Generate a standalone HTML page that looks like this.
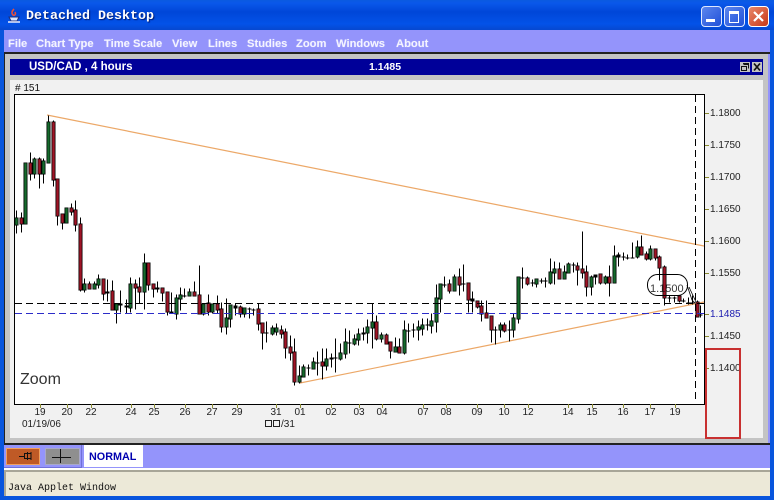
<!DOCTYPE html>
<html><head><meta charset="utf-8">
<style>
html,body{margin:0;padding:0;background:#0855dd}
#w{position:relative;width:774px;height:500px;overflow:hidden;background:#0855dd;font-family:"Liberation Sans",sans-serif}
#w div{position:absolute}
.m{top:37px;color:#f4f4ff;font-weight:bold;font-size:11.2px;line-height:14px;white-space:nowrap;text-shadow:0 0 1px #c0c0ff}
.y{left:710px;font-size:10px;line-height:12px;color:#222;white-space:nowrap}
.d{top:407px;font-size:10px;line-height:12px;color:#222;width:20px;text-align:center}
.btn{border-radius:4px}
</style></head><body>
<div id="w">
<div style="left:0;top:0;width:774px;height:30px;background:linear-gradient(180deg,#0a5ae0 0,#0a58ea 3px,#0046d8 12px,#0352e8 24px,#0648d0 30px)"></div>
<div style="left:26px;top:9px;font:bold 13.33px/16px 'Liberation Mono',monospace;color:#fff;text-shadow:1px 1px 1px #001a70;white-space:nowrap">Detached Desktop</div>
<svg style="position:absolute;left:7px;top:7px" width="14" height="18" viewBox="0 0 14 18"><path d="M7 2C5 4 4 6 6 8C8 9 9 7 8 5" fill="none" stroke="#e8503a" stroke-width="1.6"/><path d="M2 10H12L10 14H4Z" fill="#d8e4ff" stroke="#1c2f80"/><path d="M1 15H13" stroke="#e8ecff" stroke-width="1.5"/></svg>

<div class="btn" style="left:701px;top:6px;width:19px;height:19px;border:1px solid #dfe8ff;background:linear-gradient(135deg,#5c86ee,#2050d8)"></div>
<div style="left:706px;top:19px;width:9px;height:3px;background:#fff"></div>
<div class="btn" style="left:724px;top:6px;width:19px;height:19px;border:1px solid #dfe8ff;background:linear-gradient(135deg,#5c86ee,#2050d8)"></div>
<div style="left:729px;top:11px;width:8px;height:8px;border:1px solid #fff;border-top:3px solid #fff"></div>
<div class="btn" style="left:748px;top:6px;width:19px;height:19px;border:1px solid #fff;background:linear-gradient(135deg,#e8886a,#c83818)"></div>
<svg style="position:absolute;left:748px;top:6px" width="21" height="21"><path d="M6 6L15 15M15 6L6 15" stroke="#fff" stroke-width="2.2"/></svg>

<div style="left:4px;top:30px;width:766px;height:22px;background:#9494fb"></div>
<div class="m" style="left:8px">File</div>
<div class="m" style="left:36px">Chart Type</div>
<div class="m" style="left:104px">Time Scale</div>
<div class="m" style="left:172px">View</div>
<div class="m" style="left:208px">Lines</div>
<div class="m" style="left:247px">Studies</div>
<div class="m" style="left:296px">Zoom</div>
<div class="m" style="left:336px">Windows</div>
<div class="m" style="left:396px">About</div>

<div style="left:4px;top:52px;width:766px;height:2px;background:#222"></div>
<div style="left:4px;top:54px;width:1px;height:389px;background:#222"></div>
<div style="left:5px;top:54px;width:763px;height:389px;background:#c4c4c4"></div>
<div style="left:768px;top:54px;width:2px;height:416px;background:#9494fb"></div>
<div style="left:10px;top:59px;width:753px;height:16px;background:#000099"></div>
<div style="left:29px;top:60px;color:#fff;font-weight:bold;font-size:11.5px;line-height:15px;white-space:nowrap">USD/CAD , 4 hours</div>
<div style="left:369px;top:60px;color:#fff;font-weight:bold;font-size:10.5px;line-height:15px">1.1485</div>
<svg style="position:absolute;left:740px;top:62px" width="23" height="10"><rect width="10" height="10" fill="#c4c4c4"/><path d="M3.5 2.5H8.5V6.5M1.5 4.5H6.5V8.5H1.5Z" fill="none" stroke="#111"/><path d="M3 1.5H9" stroke="#111"/><rect x="12" width="10" height="10" fill="#c4c4c4"/><path d="M14 1.5L20 8.5M20 1.5L14 8.5" stroke="#111" stroke-width="1.7"/></svg>

<div style="left:10px;top:80px;width:753px;height:358px;background:#f1f1f1"></div>
<div style="left:15px;top:83px;font-size:10px;line-height:12px;color:#111">#&nbsp;151</div>
<div style="left:14px;top:94px;width:689px;height:309px;background:#fff;border:1px solid #000"></div>

<svg style="position:absolute;left:0;top:0" width="774" height="500" fill="none">
<path d="M47 115L704 246M300 383L704 302" stroke="#eca868" stroke-width="1.2"/>
<path transform="translate(.5 .5)" stroke="#000" stroke-width="1" d="M16 210V233M21 212V232M25 163V223M30 152V180M34 157V178M39 157V188M43 158V183M48 115V163M53 120V186M57 178V225M62 213V229M66 207V222M71 203V215M75 200V231M80 217V291M84 278V292M89 281V289M94 281V289M98 274V288M103 279V300M107 279V301M112 280V309M116 304V323M120 290V312M126 299V313M130 277V312M135 279V309M139 277V303M144 253V309M148 263V290M153 284V297M157 281V292M162 288V301M167 292V315M171 292V313M176 294V319M180 287V310M184 288V297M189 288V296M194 281V296M199 265V313M203 303V315M208 294V315M212 303V313M217 295V313M221 302V332M226 298V334M230 305V327M235 303V315M240 305V317M244 308V317M249 307V318M253 308V315M258 303V330M262 323V349M266 321V342M272 325V335M276 323V335M281 325V338M285 328V358M290 335V360M294 338V385M299 365V383M303 364V377M308 364V375M313 357V369M317 351V375M322 348V379M326 348V370M331 353V367M335 338V372M340 343V360M345 328V358M349 330V353M354 334V345M358 328V345M363 327V340M367 319V343M372 303V348M376 315V340M381 332V342M386 333V343M390 342V358M395 337V351M399 338V352M404 320V354M408 323V342M413 323V337M418 320V340M422 318V335M427 318V330M431 313V333M436 284V332M440 283V312M444 276V287M449 279V293M454 274V290M459 268V295M463 264V291M468 283V312M472 291V312M477 300V308M481 300V321M486 300V318M491 316V342M495 326V344M500 322V337M504 322V332M509 320V341M513 313V337M518 277V323M522 267V288M527 276V285M532 279V286M536 278V287M541 278V283M545 277V287M550 258V284M554 261V284M559 262V278M564 265V278M568 262V272M573 262V272M577 262V285M582 231V278M586 265V296M591 275V295M595 274V284M600 274V284M605 275V284M609 265V296M614 245V282M618 252V266M623 252V260M627 254V259M632 242V258M637 240V258M641 235V255M646 251V260M650 245V260M655 248V260M659 255V280M664 265V305M669 295V302M674 296V302M679 296V302M683 298V302M688 297V304M692 295V304M697 300V317M700 305V317"/>
<g transform="translate(.5 .5)">
<path stroke="#000" stroke-width="4" d="M107 291V293M120 303V305M126 305V307M157 287V289M171 311V313M184 295V296M235 305V308M249 308V309M253 309V310M266 332V333M308 367V368M317 362V363M331 357V359M335 357V358M349 342V343M363 332V334M408 330V331M413 329V330M427 324V325M444 284V285M463 283V284M472 298V301M495 329V330M509 329V330M522 277V278M532 282V283M541 280V281M545 280V281M573 264V265M595 274V277M618 254V257M623 256V257M627 257V258M632 257V258M669 297V298M674 297V298M683 300V301M688 302V303M692 302V303M700 314V315"/>
<g stroke-linecap="square">
<path stroke="#000" stroke-width="4" d="M16 219V223M25 164V222M34 160V172M43 162V172M48 123V161M66 209V221M84 285V288M94 285V287M98 280V283M116 305V308M130 285V306M144 264V290M176 299V312M180 296V297M189 293V294M203 305V312M212 305V310M226 319V325M230 306V317M244 309V312M272 329V332M276 329V330M299 377V380M303 368V375M313 363V367M326 360V364M340 354V357M345 343V352M354 340V342M358 335V338M367 328V331M372 323V326M381 336V337M395 348V350M404 331V351M418 328V328M422 326V327M431 322V324M436 299V320M440 285V297M454 278V289M500 326V328M513 319V328M518 278V317M536 280V282M550 273V281M554 270V271M564 273V277M568 265V271M591 278V285M605 278V281M614 257V281M637 248V255M650 250V257"/>
<path stroke="#000" stroke-width="4" d="M21 219V222M30 164V172M39 160V172M53 123V178M57 180V214M62 215V221M71 209V210M75 211V223M80 225V288M89 285V287M103 280V292M112 292V308M135 285V286M139 288V290M148 264V283M153 285V287M162 289V291M167 293V310M194 293V294M199 296V312M208 304V310M217 305V308M221 310V325M240 308V312M258 310V322M262 324V331M281 331V332M285 333V346M290 348V351M294 353V380M322 363V364M376 323V337M386 336V342M390 343V349M399 348V351M449 285V289M459 278V283M468 284V298M477 302V305M481 307V312M486 314V316M491 317V328M504 326V329M527 279V282M559 270V277M577 267V268M582 270V271M586 273V285M600 275V281M609 278V281M641 248V253M646 255V257M655 250V256M659 258V266M664 268V296M679 297V299M697 303V315"/>
<path stroke="#156a2c" stroke-width="2.4" d="M16 219V223M25 164V222M34 160V172M43 162V172M48 123V161M66 209V221M84 285V288M94 285V287M98 280V283M116 305V308M130 285V306M144 264V290M176 299V312M180 296V297M189 293V294M203 305V312M212 305V310M226 319V325M230 306V317M244 309V312M272 329V332M276 329V330M299 377V380M303 368V375M313 363V367M326 360V364M340 354V357M345 343V352M354 340V342M358 335V338M367 328V331M372 323V326M381 336V337M395 348V350M404 331V351M418 328V328M422 326V327M431 322V324M436 299V320M440 285V297M454 278V289M500 326V328M513 319V328M518 278V317M536 280V282M550 273V281M554 270V271M564 273V277M568 265V271M591 278V285M605 278V281M614 257V281M637 248V255M650 250V257"/>
<path stroke="#a01426" stroke-width="2.4" d="M21 219V222M30 164V172M39 160V172M53 123V178M57 180V214M62 215V221M71 209V210M75 211V223M80 225V288M89 285V287M103 280V292M112 292V308M135 285V286M139 288V290M148 264V283M153 285V287M162 289V291M167 293V310M194 293V294M199 296V312M208 304V310M217 305V308M221 310V325M240 308V312M258 310V322M262 324V331M281 331V332M285 333V346M290 348V351M294 353V380M322 363V364M376 323V337M386 336V342M390 343V349M399 348V351M449 285V289M459 278V283M468 284V298M477 302V305M481 307V312M486 314V316M491 317V328M504 326V329M527 279V282M559 270V277M577 267V268M582 270V271M586 273V285M600 275V281M609 278V281M641 248V253M646 255V257M655 250V256M659 258V266M664 268V296M679 297V299M697 303V315"/>
</g>
</g>
<path d="M15 303.500H704" stroke="#000" stroke-dasharray="7 4"/>
<path d="M15 313.500H704" stroke="#2c2cc8" stroke-dasharray="7 4"/>
<path d="M695.500 95V403" stroke="#000" stroke-dasharray="7 4"/>
<rect x="647.500" y="274.500" width="40" height="21" rx="10" stroke="#000"/>
<path d="M687 285L692 300L695 303M689 287L696 302" stroke="#000" stroke-width=".8"/>
<text x="650" y="292" font-family="Liberation Sans,sans-serif" font-size="11" fill="#111" fill-opacity=".85">1.1500</text>
<path d="M705 113.500H709M705 145.500H709M705 177.500H709M705 209.500H709M705 241.500H709M705 273.500H709M705 314.500H709M705 336.500H709M705 368.500H709" stroke="#8a8a30"/>
<path d="M40.500 404V408M67.500 404V408M91.500 404V408M131.500 404V408M154.500 404V408M185.500 404V408M212.500 404V408M237.500 404V408M276.500 404V408M300.500 404V408M331.500 404V408M359.500 404V408M382.500 404V408M423.500 404V408M446.500 404V408M477.500 404V408M504.500 404V408M528.500 404V408M568.500 404V408M592.500 404V408M623.500 404V408M650.500 404V408M675.500 404V408" stroke="#8a8a30"/>
</svg>

<div class="y" style="top:108px">1.1800</div>
<div class="y" style="top:140px">1.1750</div>
<div class="y" style="top:172px">1.1700</div>
<div class="y" style="top:204px">1.1650</div>
<div class="y" style="top:236px">1.1600</div>
<div class="y" style="top:268px">1.1550</div>
<div class="y" style="top:309px;color:#1c1cb0">1.1485</div>
<div class="y" style="top:331px">1.1450</div>
<div class="y" style="top:363px">1.1400</div>
<div style="left:705px;top:348px;width:32px;height:87px;border:2px solid #c83030"></div>
<div style="left:20px;top:370px;font-size:16px;line-height:19px;color:#333">Zoom</div>

<div class="d" style="left:30px">19</div>
<div class="d" style="left:57px">20</div>
<div class="d" style="left:81px">22</div>
<div class="d" style="left:121px">24</div>
<div class="d" style="left:144px">25</div>
<div class="d" style="left:175px">26</div>
<div class="d" style="left:202px">27</div>
<div class="d" style="left:227px">29</div>
<div class="d" style="left:266px">31</div>
<div class="d" style="left:290px">01</div>
<div class="d" style="left:321px">02</div>
<div class="d" style="left:349px">03</div>
<div class="d" style="left:372px">04</div>
<div class="d" style="left:413px">07</div>
<div class="d" style="left:436px">08</div>
<div class="d" style="left:467px">09</div>
<div class="d" style="left:494px">10</div>
<div class="d" style="left:518px">12</div>
<div class="d" style="left:558px">14</div>
<div class="d" style="left:582px">15</div>
<div class="d" style="left:613px">16</div>
<div class="d" style="left:640px">17</div>
<div class="d" style="left:665px">19</div>
<div style="left:22px;top:419px;font-size:10px;line-height:12px;color:#222;white-space:nowrap">01/19/06</div>
<div style="left:265px;top:419px;font-size:10px;line-height:12px;color:#222;white-space:nowrap"><span style="display:inline-block;width:5px;height:5px;border:1px solid #222;margin-right:1px"></span><span style="display:inline-block;width:5px;height:5px;border:1px solid #222;margin-right:1px"></span>/31</div>

<div style="left:4px;top:443px;width:766px;height:2px;background:#222"></div>
<div style="left:4px;top:445px;width:766px;height:25px;background:#9494fb"></div>
<div style="left:81px;top:445px;width:1px;height:23px;background:#7070d8"></div>
<div style="left:4px;top:467px;width:78px;height:1px;background:#7070d8"></div>
<div style="left:6px;top:448px;width:32px;height:15px;background:#bf5a26;border:1px solid #f0a060"></div>
<svg style="position:absolute;left:18px;top:450px" width="14" height="12"><path d="M1 6.500H6M9.500 2V10M13 2V10M6.500 3V9M6.500 3.500H13M6.500 8.500H13" stroke="#111" fill="none"/></svg>
<div style="left:45px;top:448px;width:33px;height:15px;background:#8f8f8f;border:1px solid #a8a8c8"></div>
<svg style="position:absolute;left:52px;top:449px" width="20" height="14"><path d="M0 8.500H19M8.500 0V14" stroke="#111" fill="none"/></svg>
<div style="left:84px;top:445px;width:59px;height:22px;background:#fff"></div>
<div style="left:89px;top:450px;font-weight:bold;font-size:10.8px;line-height:15px;color:#0000b0">NORMAL</div>
<div style="left:4px;top:468px;width:766px;height:2px;background:#fff"></div>
<div style="left:4px;top:470px;width:766px;height:26px;background:#ece9d8"></div>
<div style="left:4px;top:470px;width:766px;height:2px;background:#a8a698"></div>
<div style="left:4px;top:472px;width:2px;height:24px;background:#a8a698"></div>
<div style="left:8px;top:482px;font:10px/13px 'Liberation Mono',monospace;color:#111;white-space:nowrap">Java Applet Window</div>
</div>
</body></html>
